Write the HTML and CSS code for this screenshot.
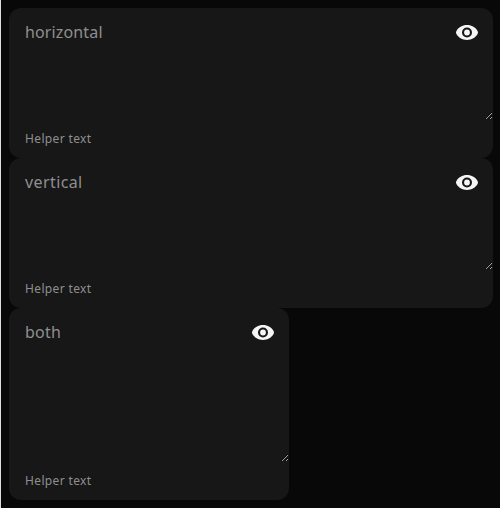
FILE: index.html
```html
<!DOCTYPE html>
<html lang="en"><head><meta charset="utf-8"><title>Text areas</title><link rel="stylesheet" href="styles.css"></head>
<body>
<main class="stack">
<div class="field"><div class="row"><textarea class="input horizontal" placeholder="horizontal"></textarea><svg class="eye" viewBox="0 0 24 24"><path fill-rule="evenodd" d="M12 5C7.200 5 3.400 7.300 1.300 11.200Q.700 12.500 1.300 13.800C3.400 17.700 7.200 20 12 20s8.600-2.300 10.700-6.200Q23.300 12.500 22.700 11.200C20.600 7.300 16.800 5 12 5zM12 17.500a5 5 0 1 1 0-10 5 5 0 0 1 0 10zm0-7.900a2.900 2.900 0 1 0 0 5.800 2.900 2.900 0 0 0 0-5.800z"/></svg></div><div class="helper">Helper text</div></div>
<div class="field"><div class="row"><textarea class="input vertical" placeholder="vertical"></textarea><svg class="eye" viewBox="0 0 24 24"><path fill-rule="evenodd" d="M12 5C7.200 5 3.400 7.300 1.300 11.200Q.700 12.500 1.300 13.800C3.400 17.700 7.200 20 12 20s8.600-2.300 10.700-6.200Q23.300 12.500 22.700 11.200C20.600 7.300 16.800 5 12 5zM12 17.500a5 5 0 1 1 0-10 5 5 0 0 1 0 10zm0-7.900a2.900 2.900 0 1 0 0 5.800 2.900 2.900 0 0 0 0-5.800z"/></svg></div><div class="helper">Helper text</div></div>
<div class="field small"><div class="row"><textarea class="input both" placeholder="both"></textarea><svg class="eye" viewBox="0 0 24 24"><path fill-rule="evenodd" d="M12 5C7.200 5 3.400 7.300 1.300 11.200Q.700 12.500 1.300 13.800C3.400 17.700 7.200 20 12 20s8.600-2.300 10.700-6.200Q23.300 12.500 22.700 11.200C20.600 7.300 16.800 5 12 5zM12 17.500a5 5 0 1 1 0-10 5 5 0 0 1 0 10zm0-7.900a2.900 2.900 0 1 0 0 5.800 2.900 2.900 0 0 0 0-5.800z"/></svg></div><div class="helper">Helper text</div></div>
</main>
</body></html>
```
FILE: styles.css
```css
* { box-sizing: border-box; }
body { margin: 0; height: 508px; overflow: hidden; background: #080808; border-left: 1px solid #ddd; font-family: "Noto Sans", sans-serif; }
.stack { padding: 8px 7px 8px 8px; }
.field { height: 150px; border-radius: 12px; background: #171717; display: flex; flex-direction: column; overflow: hidden; }
.small { width: 280px; height: 192px; }
.row { position: relative; height: 112px; }
.small .row { height: 154px; }
.input { display: block; width: 100%; height: 100%; padding: 12px 52px 0 16px; border: 0; outline: 0; background: transparent; color: #f5f5f5; font: 16px/24px "Noto Sans", sans-serif; }
.input::placeholder { color: #8f8f8f; opacity: 1; }
.horizontal { resize: horizontal; letter-spacing: .14px; }
.vertical { resize: vertical; letter-spacing: .4px; }
.both { resize: both; letter-spacing: .2px; }
.eye { position: absolute; right: 14px; top: 12px; width: 24px; height: 24px; fill: #f5f5f5; pointer-events: none; }
.helper { padding: 11px 16px 0; font-size: 12px; line-height: 16px; letter-spacing: .36px; color: #8f8f8f; }
```
